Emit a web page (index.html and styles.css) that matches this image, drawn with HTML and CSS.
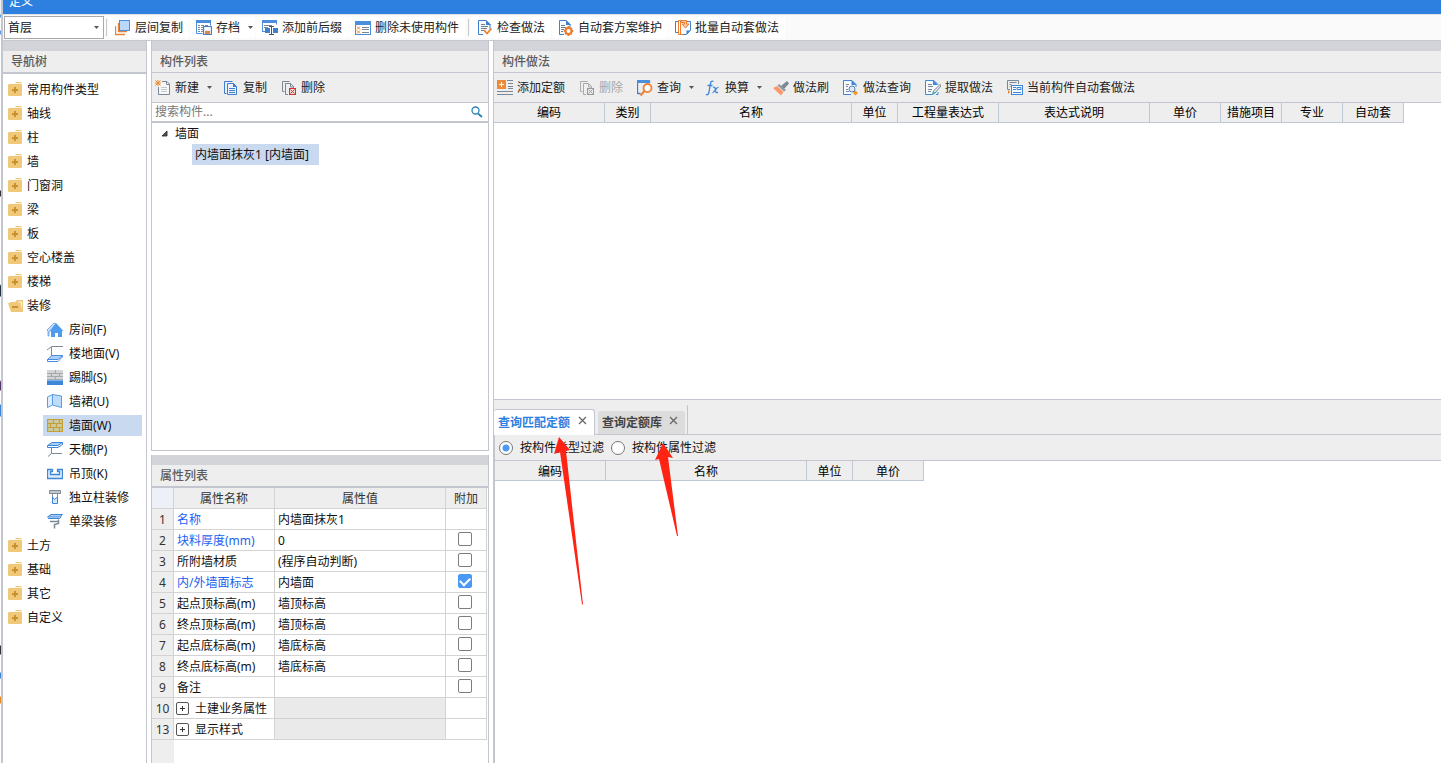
FILE: index.html
```html
<!DOCTYPE html>
<html lang="zh-CN">
<head>
<meta charset="utf-8">
<title>定义</title>
<link rel="stylesheet" href="styles.css">
</head>
<body>
<svg class="sprite" aria-hidden="true">
  <symbol id="folder" viewBox="0 0 16 16"><path d="M7 1.200L8 0h5l1 1.200z" fill="#efc87a"/><rect x="0" y="2" width="14" height="12" rx="1" fill="#efc87a"/><path d="M6 5h2v2h2v2H8v2H6V9H4V7h2z" fill="#c9922e"/></symbol>
  <symbol id="folder-open" viewBox="0 0 16 16"><path d="M2 4h5l2-2h6v12h-2L12 5H2z" fill="#efc87a"/><path d="M0 5h12l2 9H3z" fill="#efc87a"/><path d="M12.500 4.500l1.500 7v-8l-4 0v1z" fill="#fff3d8"/><path d="M4 8h6v2H4z" fill="#c9922e"/></symbol>
  <symbol id="caret" viewBox="0 0 5 3"><path d="M0 0h5L2.500 3z" fill="#555"/></symbol>
  <symbol id="close" viewBox="0 0 9 9"><path d="M1 1l7 7M8 1L1 8" stroke="#666" stroke-width="1.300" fill="none"/></symbol>
  <symbol id="copy" viewBox="0 0 16 16"><path d="M3.500 13.500h-2V1.500h8" fill="none" stroke="#3f7fce"/><path d="M4.500 3.500h6l3 3v8h-9z" fill="#e9f2fd" stroke="#3f7fce"/><path d="M10 3v4h4z" fill="#3f7fce"/><path d="M6 8.500h6M6 10.500h6M6 12.500h6" stroke="#3f7fce"/></symbol>
</svg>
<div class="screen">
  <div class="backdrop"></div>
  <div class="window">
    <header class="titlebar">定义</header>
    <div class="main-toolbar">
      <div class="floor">
        <select aria-label="楼层"><option>首层</option></select>
        <svg class="caret"><use href="#caret"/></svg>
      </div>
      <span class="sep"></span>
      <button class="tool"><svg class="icon" viewBox="0 0 16 16"><path d="M.500 6v8.500H10M3.500 3v8.500H12" fill="none" stroke="#e8833a" stroke-width="1.300"/><rect x="4.500" y=".5" width="10" height="10" fill="#b9d8fb" stroke="#4a8fdc"/></svg>层间复制</button>
      <button class="tool has-menu"><svg class="icon" viewBox="0 0 16 16"><path d="M.500 13.500V.500h14v5" fill="#fff" stroke="#4a8fdc"/><path d="M.500 13.500h6" stroke="#4a8fdc"/><path d="M0 0h15v3H0z" fill="#4a8fdc"/><path d="M2 5.500h2M5 5.500h3M9 5.500h3M2 7.500h2M5 7.500h2M2 9.500h2M5 9.500h2M2 11.500h2M5 11.500h2" stroke="#7b8794"/><rect x="7.500" y="6.500" width="8" height="8" fill="#dcebfb" stroke="#3f7fce"/><path d="M9 7h5v3H9z" fill="#fff"/><path d="M9 11h5v3H9z" fill="#e8833a"/></svg>存档<svg class="caret"><use href="#caret"/></svg></button>
      <button class="tool"><svg class="icon" viewBox="0 0 16 16"><path d="M.500 11.500V.500h14v4" fill="none" stroke="#4a8fdc"/><path d="M0 0h15v3H0z" fill="#4a8fdc"/><path d="M2 5.500h8M2 7.500h4" stroke="#7b8794"/><path d="M0 11.500h4" stroke="#4a8fdc"/><path d="M3 8h5v5H3zM11 8h5v5h-5z" fill="#3f7fce"/><path d="M7 6.500h5M7 14.500h5M9.500 6.500v8" stroke="#46566b"/></svg>添加前后缀</button>
      <button class="tool"><svg class="icon" viewBox="0 0 16 16"><rect x=".5" y="1.500" width="15" height="13" fill="#fff" stroke="#4a8fdc"/><path d="M0 1h16v4H0z" fill="#4a8fdc"/><path d="M7 7.500h7M7 9.500h7M7 12.500h7" stroke="#7b8794"/><path d="M2 6.500l3 3M5 6.500l-3 3M2 10.500l3 3M5 10.500l-3 3" stroke="#e88b23"/></svg>删除未使用构件</button>
      <span class="sep"></span>
      <button class="tool"><svg class="icon" viewBox="0 0 16 16"><path d="M6 14.500H1.500V.500H9l4 4V9" fill="#f5faff" stroke="#3f7fce"/><path d="M9 0v5h5z" fill="#3f7fce"/><path d="M4 4.500h4M4 6.500h7M4 8.500h6M4 10.500h3" stroke="#6f7f91"/><path d="M7 10l3 3.500 4.500-5" fill="none" stroke="#ee7c2b" stroke-width="1.800"/></svg>检查做法</button>
      <button class="tool"><svg class="icon" viewBox="0 0 16 16"><path d="M6 14.500H1.500V.500H8l4 4V7" fill="#f5faff" stroke="#3f7fce"/><path d="M8 0v5h5z" fill="#3f7fce"/><path d="M3 5.500h4M3 7.500h5M3 9.500h3M3 11.500h2" stroke="#6f7f91"/><circle cx="10.500" cy="11" r="3" fill="#fff" stroke="#ee7c2b" stroke-width="2"/><path d="M10.500 6v2M10.500 14v2M5.800 11h2M13.200 11h2M7.200 7.700l1.200 1.200M13.800 7.700l-1.200 1.200M7.200 14.300l1.200-1.200M13.800 14.300l-1.200-1.200" stroke="#ee7c2b" stroke-width="2"/></svg>自动套方案维护</button>
      <button class="tool"><svg class="icon" viewBox="0 0 16 16"><path d="M3 12.500H.500v-11H4" fill="none" stroke="#3f7fce"/><path d="M8 .500H3.500v14h2" fill="none" stroke="#ee7c2b"/><path d="M5.500 1.500h10v9l-4 4h-6z" fill="#f5faff" stroke="#3f7fce"/><path d="M5.500 2v12.500h3" fill="none" stroke="#ee7c2b"/><path d="M11.500 14.500v-4h4z" fill="#3f7fce"/><path d="M6 .500h5.500V4H14l-3.500 4L7 4h2.500V2.500H6z" fill="#fbc59d" stroke="#ee7c2b"/></svg>批量自动套做法</button>
    </div>

    <div class="workspace">
      <nav class="panel nav">
        <div class="grip"></div>
        <h2 class="panel-title thick">导航树</h2>
        <ul class="tree">
          <li><a href="#"><svg class="icon"><use href="#folder"/></svg>常用构件类型</a></li>
          <li><a href="#"><svg class="icon"><use href="#folder"/></svg>轴线</a></li>
          <li><a href="#"><svg class="icon"><use href="#folder"/></svg>柱</a></li>
          <li><a href="#"><svg class="icon"><use href="#folder"/></svg>墙</a></li>
          <li><a href="#"><svg class="icon"><use href="#folder"/></svg>门窗洞</a></li>
          <li><a href="#"><svg class="icon"><use href="#folder"/></svg>梁</a></li>
          <li><a href="#"><svg class="icon"><use href="#folder"/></svg>板</a></li>
          <li><a href="#"><svg class="icon"><use href="#folder"/></svg>空心楼盖</a></li>
          <li><a href="#"><svg class="icon"><use href="#folder"/></svg>楼梯</a></li>
          <li><a href="#"><svg class="icon"><use href="#folder-open"/></svg>装修</a>
            <ul class="subtree">
              <li><a href="#"><svg class="icon" viewBox="0 0 16 16"><path d="M0 8l7-7 2 1-7 8v4H1V9z" fill="#c7e0fb" stroke="#5a9be3" stroke-width=".8"/><path d="M9 1l7 7.500-1 1V15h-4v-4H8v4H4V9.500L3 9z" fill="#4f9bee"/></svg>房间(F)</a></li>
              <li><a href="#"><svg class="icon" viewBox="0 0 16 16"><path d="M4.500 10V.500H16M4 1L0 4" fill="none" stroke="#7e8a96"/><path d="M5 9.500h10.500l-4.500 4H.500z" fill="#a9d0fa" stroke="#4a8fdc"/><path d="M.500 13.500v2H11l4.500-4.500V9.500" fill="none" stroke="#4a8fdc"/></svg>楼地面(V)</a></li>
              <li><a href="#"><svg class="icon" viewBox="0 0 16 16"><path d="M0 0h16v10H0z" fill="#d3d5d7"/><path d="M0 3.500h16M0 6.500h16M0 9.500h16M8.500 0v3M4.500 4v3M12.500 4v3M8.500 7v3" stroke="#a4a9ae"/><path d="M0 10h16v5H0z" fill="#3f87d6"/><path d="M0 10h16v1H0z" fill="#7db4f2"/></svg>踢脚(S)</a></li>
              <li><a href="#"><svg class="icon" viewBox="0 0 16 16"><path d="M.500 3L5.500.500v10.500L.500 13.500z" fill="#dcecfd" stroke="#5a9be3"/><path d="M5.500.500l9 1.500v11.500l-9-2.500z" fill="#bfdcfb" stroke="#5a9be3"/></svg>墙裙(U)</a></li>
              <li><a href="#" class="selected"><svg class="icon" viewBox="0 0 16 16"><path d="M.500 1.500h15v12H.500z" fill="#c9c9a4" stroke="#c3a02f" stroke-width="1.200"/><path d="M0 5.500h16M0 9.500h16M6.500 2v3M12.500 2v3M3.500 6v3M9.500 6v3M6.500 10v3M12.500 10v3" stroke="#c3a02f" stroke-width="1.100"/></svg>墙面(W)</a></li>
              <li><a href="#"><svg class="icon" viewBox="0 0 16 16"><path d="M5 .500h10.500l-4.500 3H.500z" fill="#a9d0fa" stroke="#3f87d6"/><path d="M.500 3.500v2H11l4.500-3v-2" fill="none" stroke="#3f87d6"/><path d="M4.500 6v5.500H15M4.500 11.500L1 14.500" fill="none" stroke="#7e8a96"/></svg>天棚(P)</a></li>
              <li><a href="#"><svg class="icon" viewBox="0 0 16 16"><path d="M.500 3.500h5v2h-2v3h9v-3h-2v-2h5v9H.500z" fill="#dcecfd" stroke="#3f87d6" stroke-width="1.300"/></svg>吊顶(K)</a></li>
              <li><a href="#"><svg class="icon" viewBox="0 0 16 16"><path d="M2.500 .500h11v3h-11z" fill="#c3c7cb" stroke="#7e8a96"/><path d="M5.500 4v3M10.500 4v3" stroke="#7e8a96"/><path d="M5.500 7v6.500h5V7L7.500 9.500z" fill="#d2e6fc" stroke="#3f87d6"/></svg>独立柱装修</a></li>
              <li><a href="#"><svg class="icon" viewBox="0 0 16 16"><path d="M4 .500h11.500l-3 2.500H.500z" fill="#a9d0fa" stroke="#3f87d6"/><path d="M1 4.500h11.500l2-2" fill="none" stroke="#3f87d6"/><path d="M3 7.500h8.500v-2M7.500 14.500V10.500l4-1V8" fill="none" stroke="#7e8a96" stroke-width="1.500"/></svg>单梁装修</a></li>
            </ul>
          </li>
          <li><a href="#"><svg class="icon"><use href="#folder"/></svg>土方</a></li>
          <li><a href="#"><svg class="icon"><use href="#folder"/></svg>基础</a></li>
          <li><a href="#"><svg class="icon"><use href="#folder"/></svg>其它</a></li>
          <li><a href="#"><svg class="icon"><use href="#folder"/></svg>自定义</a></li>
        </ul>
      </nav>

      <div class="middle">
        <section class="panel list">
          <div class="grip"></div>
          <h2 class="panel-title">构件列表</h2>
          <div class="toolbar">
            <button class="tool has-menu"><svg class="icon" viewBox="0 0 16 16"><path d="M7 1.500h5l2.500 2.500v10.500h-11V7" fill="#f7f7f7" stroke="#7b8794"/><path d="M11.500 1v3.500H15" fill="none" stroke="#7b8794"/><path d="M6 7.500h6M6 9.500h6M6 11.500h6" stroke="#c3c8cd"/><path d="M.500.500l5 5M5.500.500l-5 5M3 0v6M0 3h6" stroke="#ee8a2b"/></svg>新建<svg class="caret"><use href="#caret"/></svg></button>
            <button class="tool"><svg class="icon"><use href="#copy"/></svg>复制</button>
            <button class="tool"><svg class="icon" viewBox="0 0 16 16"><path d="M3.500 11.500h-2v-10h7" fill="none" stroke="#7b8794"/><path d="M7 14.500H4.500V3.500h5l3 3V8" fill="none" stroke="#7b8794"/><path d="M9.500 3v4H13" fill="none" stroke="#7b8794"/><rect x="8.500" y="8.500" width="6" height="6" fill="#f7dcdc" stroke="#c93636"/><path d="M9.500 9.500l4 4M13.500 9.500l-4 4" stroke="#c93636"/></svg>删除</button>
          </div>
          <div class="search">
            <input type="text" placeholder="搜索构件..." aria-label="搜索构件">
            <svg class="lens" viewBox="0 0 12 12"><circle cx="4.500" cy="4.500" r="3.500" fill="none" stroke="#2b83b8" stroke-width="1.300"/><path d="M7 7.500l4 3.500" stroke="#2b83b8" stroke-width="1.800"/></svg>
          </div>
          <ul class="components">
            <li><span class="group"><svg class="expander" viewBox="0 0 8 8"><path d="M6 1v5H1z" fill="#555" stroke="#222" stroke-width=".8"/></svg>墙面</span>
              <ul><li><a href="#" class="component selected">内墙面抹灰1 [内墙面]</a></li></ul>
            </li>
          </ul>
        </section>

        <section class="panel props">
          <div class="grip"></div>
          <h2 class="panel-title thick">属性列表</h2>
          <div class="props-body">
            <table class="prop-table">
              <colgroup><col class="c-num"><col class="c-name"><col><col class="c-extra"></colgroup>
              <thead><tr><th class="corner"></th><th>属性名称</th><th>属性值</th><th>附加</th></tr></thead>
              <tbody>
                <tr><th>1</th><td class="key">名称</td><td>内墙面抹灰1</td><td></td></tr>
                <tr><th>2</th><td class="key">块料厚度(mm)</td><td>0</td><td><input type="checkbox" aria-label="附加 块料厚度"></td></tr>
                <tr><th>3</th><td>所附墙材质</td><td>(程序自动判断)</td><td><input type="checkbox" aria-label="附加 所附墙材质"></td></tr>
                <tr><th>4</th><td class="key">内/外墙面标志</td><td>内墙面</td><td><input type="checkbox" checked aria-label="附加 内/外墙面标志"></td></tr>
                <tr><th>5</th><td>起点顶标高(m)</td><td>墙顶标高</td><td><input type="checkbox" aria-label="附加 起点顶标高"></td></tr>
                <tr><th>6</th><td>终点顶标高(m)</td><td>墙顶标高</td><td><input type="checkbox" aria-label="附加 终点顶标高"></td></tr>
                <tr><th>7</th><td>起点底标高(m)</td><td>墙底标高</td><td><input type="checkbox" aria-label="附加 起点底标高"></td></tr>
                <tr><th>8</th><td>终点底标高(m)</td><td>墙底标高</td><td><input type="checkbox" aria-label="附加 终点底标高"></td></tr>
                <tr><th>9</th><td>备注</td><td></td><td><input type="checkbox" aria-label="附加 备注"></td></tr>
                <tr><th>10</th><td><button class="plus" aria-label="展开"></button>土建业务属性</td><td class="muted"></td><td></td></tr>
                <tr><th>13</th><td><button class="plus" aria-label="展开"></button>显示样式</td><td class="muted"></td><td></td></tr>
              </tbody>
            </table>
          </div>
        </section>
      </div>

      <div class="right">
        <section class="methods">
          <div class="grip"></div>
          <h2 class="panel-title">构件做法</h2>
          <div class="toolbar">
            <button class="tool"><svg class="icon" viewBox="0 0 16 16"><path d="M0 0h9v9H0z" fill="#ee8a3a"/><path d="M4.500 2v5M2 4.500h5" stroke="#fff"/><path d="M10 .500h6M11 3.500h5M11 6.500h5M11 8.500h5M0 11.500h16M0 14.500h16" stroke="#7b8794"/></svg>添加定额</button>
            <button class="tool" disabled><svg class="icon" viewBox="0 0 16 16"><path d="M3.500 11.500h-2v-10h7" fill="none" stroke="#aaa"/><path d="M7 14.500H4.500V3.500h5l3 3V8" fill="none" stroke="#aaa"/><path d="M9.500 3v4H13" fill="none" stroke="#aaa"/><rect x="8.500" y="8.500" width="6" height="6" fill="#eee" stroke="#999"/><path d="M9.500 9.500l4 4M13.500 9.500l-4 4" stroke="#999"/></svg>删除</button>
            <button class="tool has-menu"><svg class="icon" viewBox="0 0 16 16"><path d="M.500 14V1.500h12V3M.500 13.500h3" fill="none" stroke="#3f7fce" stroke-width="1.300"/><path d="M0 0h13v3H0z" fill="#4a8fdc"/><circle cx="10.500" cy="8" r="4" fill="#fff" stroke="#ee8235" stroke-width="1.800"/><path d="M7.500 11l-4 4.500" stroke="#ee8235" stroke-width="2.200"/></svg>查询<svg class="caret"><use href="#caret"/></svg></button>
            <button class="tool has-menu"><svg class="icon" viewBox="0 0 16 16"><path d="M8.500 1.500C6.500.200 5.700 2 5.400 3.800L3.900 12.500c-.4 2-1.400 2.700-2.900 1.900M2.500 5.500h5M8 7.500c2-1 2 0 2.400 2.500s.8 3.500 2.600 2M13.500 7.500c-2-.8-4 5.500-6 5" fill="none" stroke="#3f87d6" stroke-width="1.300"/></svg>换算<svg class="caret"><use href="#caret"/></svg></button>
            <button class="tool"><svg class="icon" viewBox="0 0 16 16"><path d="M7.500 6.500L14 1l2 2.500-5.500 6z" fill="#7a8893"/><path d="M6 4l7 6-2 1.500L4.500 5.500z" fill="#8d99a3"/><path d="M4 6l6.500 6L8 15.500 0 8z" fill="#ff9869"/></svg>做法刷</button>
            <button class="tool"><svg class="icon" viewBox="0 0 16 16"><path d="M8 14.500H.500V.500H9l4 4V7" fill="#f5faff" stroke="#3f87d6"/><path d="M8.500 0v5h5z" fill="#3f87d6"/><path d="M3 4.500h3M3 6.500h2M3 9.500h2M3 11.500h3" stroke="#7b8794"/><circle cx="9" cy="9" r="3" fill="#dcecfd" stroke="#5b7fae"/><path d="M11 11l2 2" stroke="#5b7fae"/><path d="M12.500 10.500l2.500 2.500-2.500 2.500-2.500-2.500z" fill="#f39a1e"/></svg>做法查询</button>
            <button class="tool"><svg class="icon" viewBox="0 0 16 16"><path d="M7 14.500H.500V.500H9l4 4M13 12v2.500h-2" fill="#f5faff" stroke="#3f87d6"/><path d="M8 0v5h5z" fill="#3f87d6"/><path d="M3 4.500h4M3 6.500h5M3 9.500h4M3 11.500h3" stroke="#7b8794"/><path d="M15 4.500l1 1.500-6 7-2.500 1.500L8.500 11z" fill="#e4e8eb" stroke="#6f7f8c" stroke-width=".9"/><path d="M8.500 11l2 2-3.500 2z" fill="#35b8cf"/></svg>提取做法</button>
            <button class="tool"><svg class="icon" viewBox="0 0 16 16"><path d="M3 9.500H.500v-9h11V4M2.500 2.500h7M2.500 4.500h2M2.500 6.500h1" fill="none" stroke="#7b8794"/><rect x="4.500" y="5.500" width="11" height="9" fill="#f5faff" stroke="#3f87d6"/><path d="M6 7.500h3M6 9.500h3M6 12.500h8M10 7.500h4v2h-4z" fill="none" stroke="#3f87d6"/><path d="M1 10l2 2-2 2z" fill="#ee8235"/></svg>当前构件自动套做法</button>
          </div>
          <table class="grid">
            <thead><tr><th class="w111">编码</th><th class="w46">类别</th><th class="w201">名称</th><th class="w46">单位</th><th class="w101">工程量表达式</th><th class="w151">表达式说明</th><th class="w71">单价</th><th class="w61">措施项目</th><th class="w61">专业</th><th class="w61">自动套</th></tr></thead>
          </table>
        </section>

        <section class="query">
          <div class="tabs">
            <div class="tab-group">
              <div class="tab active"><button class="tab-name">查询匹配定额</button><button class="tab-close" aria-label="关闭"><svg><use href="#close"/></svg></button></div>
              <div class="tab"><button class="tab-name">查询定额库</button><button class="tab-close" aria-label="关闭"><svg><use href="#close"/></svg></button></div>
            </div>
          </div>
          <div class="results">
            <div class="filters">
              <input type="radio" name="filter" id="by-type" checked><label for="by-type">按构件类型过滤</label>
              <input type="radio" name="filter" id="by-prop"><label for="by-prop">按构件属性过滤</label>
            </div>
            <table class="grid">
              <thead><tr><th class="w111">编码</th><th class="w201">名称</th><th class="w46">单位</th><th class="w71">单价</th></tr></thead>
            </table>
          </div>
          <svg class="pointers" viewBox="0 0 130 180" aria-hidden="true">
            <path d="M9 1L20 14l-4 1 17 153.500h-1L10 16l-6 2z" fill="#ff2314"/>
            <path d="M113 7l10 15-5-1 10 79h-1L109 23l-4 1z" fill="#ff2314"/>
          </svg>
        </section>
      </div>
    </div>
  </div>
</div>
</body>
</html>
```

FILE: styles.css
```css
* { box-sizing: border-box; }

body {
  margin: 0;
  background: #fff;
  color: #111;
  font: 12px/20px "Noto Sans", "Noto Sans CJK SC", sans-serif;
}

button, input, select { font: inherit; color: inherit; }
button { margin: 0; padding: 0; border: 0; background: none; }
a { color: inherit; text-decoration: none; }
ul { margin: 0; padding: 0; list-style: none; }
svg { display: block; flex: none; }

.sprite { position: absolute; width: 0; height: 0; }
.icon { width: 16px; height: 16px; }
.caret { width: 5px; height: 3px; }

.screen { display: flex; min-height: 100vh; }
.backdrop {
  width: 1px;
  background: linear-gradient(#eef2f6 14px, #5b9be6 15px 17px, #fff 18px 30px, #5b9be6 31px 34px, #fff 35px 190px, #333 191px 196px, #fff 197px 284px, #234 286px 296px, #fff 297px 380px, #536 382px 390px, #fff 391px 404px, #3f87d6 405px 416px, #fff 417px 645px, #333 646px 654px, #fff 655px 672px, #3f87d6 673px 678px, #fff 679px 696px, #e88b23 697px 703px, #fff 704px);
}
.window {
  flex: 1;
  min-width: 0;
  display: flex;
  flex-direction: column;
  border-left: 2px solid #c3c6ce;
}

.titlebar {
  height: 14px;
  padding-left: 6px;
  overflow: hidden;
  display: flex;
  align-items: flex-end;
  line-height: 24px;
  background: #2d7fe0;
  color: #fff;
}

.main-toolbar {
  display: flex;
  align-items: center;
  height: 27px;
  padding-left: 1px;
  background: #fafafa;
  border-top: 1px solid #dfe3ea;
  border-bottom: 1px solid #c5c8d0;
}
.sep { width: 1px; height: 17px; margin: 0 2px; background: #c8c8c8; }

.floor { position: relative; width: 100px; }
.floor select {
  display: block;
  width: 100%;
  height: 23px;
  padding: 0 3px;
  appearance: none;
  border: 1px solid #a9a9a9;
  border-radius: 0;
  background: #fff;
}
.floor .caret { position: absolute; right: 5px; top: 10px; }

.tool {
  display: flex;
  align-items: center;
  gap: 4px;
  height: 24px;
  padding: 0 7px;
  white-space: nowrap;
  color: #222;
}
.tool .caret { margin-left: 4px; }
.tool.has-menu { padding-right: 4px; }
.tool:disabled { color: #a8a8a8; }
.main-toolbar .tool { height: 21px; margin-right: 1px; padding: 0 6px; border-radius: 2px; background: #fff; }
.main-toolbar .tool.has-menu { padding-right: 2px; }

.workspace { flex: 1; display: flex; gap: 4px; }
.panel { display: flex; flex-direction: column; }
.grip { height: 10px; background: #d2d4da; }
.panel-title {
  margin: 0;
  height: 22px;
  padding: 1px 0 0 8px;
  font-size: 12px;
  font-weight: 500;
  line-height: 20px;
  color: #5c5c5c;
  background: #eee;
  border-bottom: 1px solid #c3c6ce;
}
.panel-title.thick { height: 23px; border-bottom-width: 2px; }
.toolbar {
  display: flex;
  align-items: center;
  height: 30px;
  background: #eee;
  border-bottom: 1px solid #c3c6ce;
}

.nav { width: 144px; border-right: 1px solid #c3c6ce; }
.tree { padding-top: 4px; }
.tree a { display: flex; align-items: center; gap: 3px; height: 24px; padding-left: 5px; }
.tree .subtree a { height: 21px; margin: 0 4px 3px 40px; padding-left: 4px; gap: 6px; white-space: nowrap; }
.subtree { padding-top: 1px; margin-bottom: -1px; }
.selected { background: #c9d9ef; }

.middle { width: 338px; display: flex; flex-direction: column; gap: 4px; }
.list { min-height: 410px; border: 1px solid #c3c6ce; border-top: 0; }
.toolbar .tool:first-child { padding-left: 3px; }
.search { display: flex; align-items: center; padding-right: 5px; border-bottom: 2px solid #c3c6ce; }
.search input { flex: 1; min-width: 0; height: 18px; padding: 0 3px; border: 0; outline: 0; background: none; }
.search input::placeholder { color: #777; opacity: 1; }
.lens { width: 12px; height: 12px; }
.group { display: flex; align-items: center; gap: 6px; height: 21px; padding-left: 9px; }
.expander { width: 8px; height: 8px; }
.component { display: inline-block; margin-left: 40px; padding: 0 10px 0 3px; line-height: 21px; }

.props { flex: 1; border: 1px solid #c3c6ce; border-width: 0 1px; }
.props-body { flex: 1; padding-right: 1px; background: linear-gradient(to right, #eee 22px, #fff 22px); }
.prop-table { width: 100%; table-layout: fixed; border-collapse: separate; border-spacing: 0; }
.prop-table th, .prop-table td {
  height: 21px;
  padding: 2px 3px 0;
  border-right: 1px solid #d3d3d3;
  border-bottom: 1px solid #d3d3d3;
  line-height: 18px;
  white-space: nowrap;
}
.prop-table th { padding: 2px 0 0; font-weight: 400; text-align: center; color: #333; background: #eee; }
.prop-table .corner { background: #edf1f7; }
.prop-table td { background: #fff; }
.prop-table td.muted { background: #eaeaea; }
.prop-table td.key { color: #1a62f0; }
.prop-table td:last-child { padding: 0 2px 2px 0; }
.c-num { width: 22px; }
.c-name { width: 101px; }
.c-extra { width: 41px; }

input[type="checkbox"] {
  display: block;
  width: 14px;
  height: 14px;
  margin: 0 auto;
  appearance: none;
  border: 1px solid #7d7d7d;
  border-radius: 2px;
  background: #fff;
}
input[type="checkbox"]:checked {
  border-color: #4a9af5;
  background: #4a9af5;
  display: grid;
  place-items: center;
}
input[type="checkbox"]:checked::before {
  content: "";
  width: 8px;
  height: 5px;
  margin-bottom: 2px;
  border: solid #fff;
  border-width: 0 0 2px 2px;
  transform: rotate(-45deg);
}
.plus {
  width: 13px;
  height: 13px;
  margin: 0 6px 0 -1px;
  vertical-align: -1px;
  border: 1px solid #555;
  border-radius: 2px;
  background:
    linear-gradient(#333, #333) center / 5px 1px no-repeat,
    linear-gradient(#333, #333) center / 1px 5px no-repeat;
}

.right { flex: 1; min-width: 0; display: flex; flex-direction: column; }
.methods { min-height: 358px; border-left: 1px solid #c3c6ce; }
.grid { table-layout: fixed; width: 0; border-collapse: separate; border-spacing: 0; color: #000; }
.grid th {
  height: 20px;
  padding: 1px 0 0;
  font-weight: 400;
  line-height: 18px;
  white-space: nowrap;
  background: #eee;
  border-right: 1px solid #bfc7d5;
  border-bottom: 1px solid #bfc7d5;
}
.w46 { width: 46px; }
.w61 { width: 61px; }
.w71 { width: 71px; }
.w101 { width: 101px; }
.w111 { width: 111px; }
.w151 { width: 151px; }
.w201 { width: 201px; }

.query {
  position: relative;
  flex: 1;
  display: flex;
  flex-direction: column;
  border-top: 1px solid #c3c6ce;
  border-left: 1px solid #c3c6ce;
}
.tabs {
  display: flex;
  align-items: flex-end;
  height: 35px;
  background: #eee;
  border-bottom: 1px solid #c3c6ce;
}
.tab-group {
  display: flex;
  align-items: flex-end;
  gap: 3px;
  height: 29px;
  padding-right: 2px;
  border-right: 1px solid #c3c6ce;
}
.tab {
  display: flex;
  align-items: center;
  gap: 7px;
  height: 23px;
  padding: 0 7px 0 4px;
  border-radius: 3px 3px 0 0;
  background: #dcdcdc;
  color: #444;
}
.tab.active {
  gap: 8px;
  height: 26px;
  margin-bottom: -1px;
  border: 1px solid #c3c6ce;
  border-width: 1px 1px 0 0;
  background: #fff;
  color: #2d7fe0;
}
.tab-name { padding-top: 1px; font-weight: 700; }
.tab-close { margin-bottom: 4px; }
.tab-close svg { width: 9px; height: 9px; }
.results { flex: 1; border-left: 1px solid #c3c6ce; }
.results th { padding-top: 2px; line-height: 17px; }
.filters {
  display: flex;
  align-items: center;
  gap: 7px;
  height: 26px;
  padding-left: 4px;
  background: #eee;
  border-bottom: 1px solid #c3c6ce;
}
input[type="radio"] {
  width: 14px;
  height: 14px;
  margin: 0;
  appearance: none;
  border: 1px solid #777;
  border-radius: 50%;
  background: #fff;
}
input[type="radio"]:checked { background: radial-gradient(circle, #4a9af5 3px, #fff 4px); }

/* Callout arrows drawn over the query panel */
.pointers {
  position: absolute;
  left: 56px;
  top: 36px;
  width: 130px;
  height: 180px;
  pointer-events: none;
}
```
